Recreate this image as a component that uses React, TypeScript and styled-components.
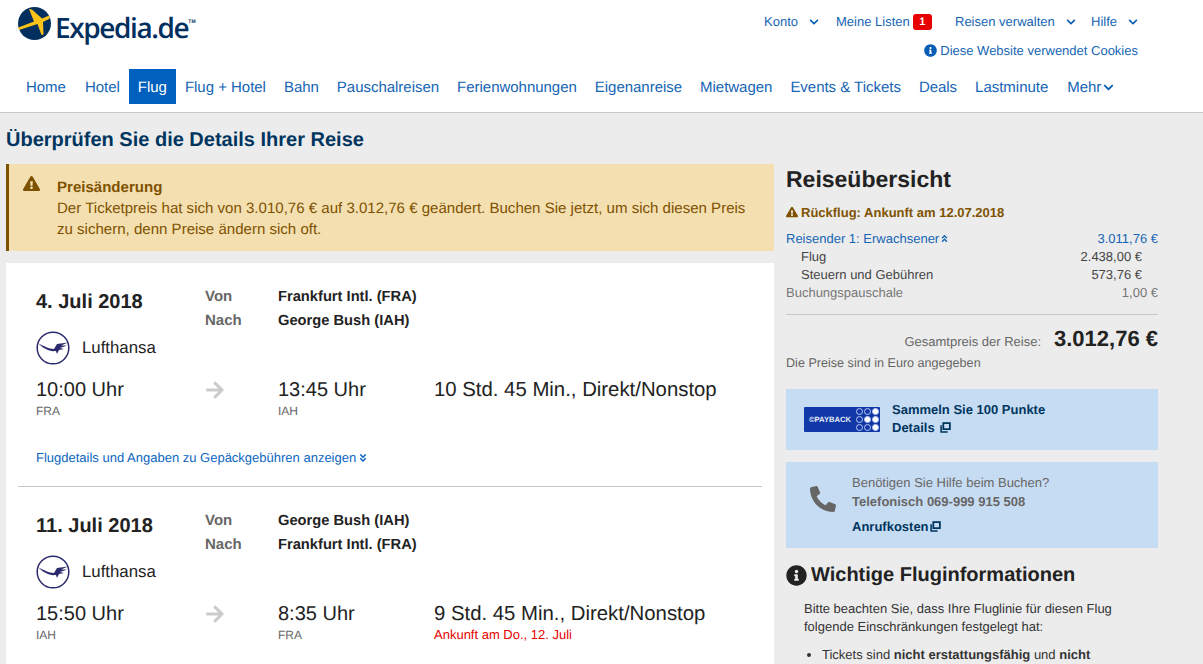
import React from 'react'
import styled, { createGlobalStyle } from 'styled-components'
import { FaChevronDown, FaInfoCircle, FaExclamationTriangle, FaArrowRight, FaAngleDoubleDown, FaAngleDoubleUp, FaPhoneAlt } from 'react-icons/fa'

const Global = createGlobalStyle`
  html, body { margin: 0; padding: 0; background: #ececec; }
  body { font-family: "Liberation Sans", Arial, sans-serif; color: #222; text-rendering: geometricPrecision; }
  #root { height: 664px; overflow: hidden; }
  * { box-sizing: border-box; }
`

const Header = styled.header`
  height: 113px;
  background: #fff;
  border-bottom: 1px solid #c8c8c8;
  padding-top: 7px;
`
const TopRow = styled.div`
  display: flex;
  justify-content: space-between;
  height: 62px;
`
const Logo = styled.div`
  display: flex;
  align-items: flex-start;
  margin-left: 18px;
`
const LogoText = styled.span`
  font-family: "Open Sans", sans-serif;
  font-weight: 600;
  font-size: 28px;
  line-height: 36px;
  letter-spacing: -1.4px;
  color: #022f5e;
  margin: 3px 0 0 4px;
`
const Tm = styled.span`
  font-size: 5px;
  font-weight: 700;
  color: #022f5e;
  margin-top: 12px;
`
const Utility = styled.div`
  display: flex;
  flex-direction: column;
  align-items: flex-end;
  padding-right: 65px;
`
const UtilityRow = styled.div`
  display: flex;
  align-items: center;
  height: 29px;
  font-size: 13px;
  color: #1565b4;
`
const UtilityItem = styled.span<{ $w: number }>`
  display: inline-flex;
  align-items: center;
  width: ${p => p.$w}px;
  svg { font-size: 10px; color: #0a5db5; }
`
const Badge = styled.span`
  background: #e60000;
  color: #fff;
  font-size: 11px;
  font-weight: 700;
  border-radius: 3px;
  width: 19px;
  height: 16px;
  margin-left: 3px;
  display: inline-flex;
  align-items: center;
  justify-content: center;
`
const CookieRow = styled.div`
  display: flex;
  align-items: center;
  gap: 3px;
  font-size: 13px;
  color: #1565b4;
  height: 14px;
  margin-top: 7px;
  svg { font-size: 13px; color: #0a5db5; }
`
const Nav = styled.nav`
  display: flex;
  padding-left: 17px;
  height: 35px;
  letter-spacing: -0.025px;
`
const NavItem = styled.a<{ $active?: boolean }>`
  display: flex;
  align-items: center;
  gap: 2px;
  padding: 1px 9px 0;
  font-size: 15px;
  color: ${p => (p.$active ? '#fff' : '#1565b4')};
  background: ${p => (p.$active ? '#0060bd' : 'transparent')};
  &:first-child { padding-right: 10px; }
  &:last-child { padding-left: 10px; }
  svg { font-size: 11px; color: #0a5db5; }
`

const Title = styled.h1`
  margin: 0;
  padding: 15px 0 0 6px;
  height: 51px;
  font-size: 20px;
  line-height: 24px;
  font-weight: 700;
  color: #00355f;
`
const Main = styled.main`
  display: flex;
  padding-left: 6px;
  gap: 12px;
  align-items: flex-start;
`
const Left = styled.section`
  width: 768px;
`
const Alert = styled.div`
  display: flex;
  height: 87px;
  background: #f3dfb0;
  border-left: 3px solid #7f5200;
  padding: 13px 20px 0 14px;
  color: #7f5200;
  font-size: 15.05px;
  line-height: 21px;
  margin-bottom: 12px;
`
const AlertIcon = styled.div`
  width: 34px;
  margin-top: -2px;
  font-size: 17px;
  flex: none;
`
const AlertTitle = styled.div`
  font-weight: 700;
`
const Card = styled.div`
  background: #fff;
  padding: 0 12px;
`
const Flight = styled.div`
  padding: 25px 18px 0;
  height: 223px;
  & + & { border-top: 1px solid #c8c8c8; height: 224px; }
`
const FlightGrid = styled.div`
  display: grid;
  grid-template-columns: 169px 73px 156px 1fr;
  align-items: start;
`
const DateText = styled.div`
  font-size: 20px;
  font-weight: 700;
  line-height: 28px;
`
const RouteLabels = styled.div`
  font-size: 15px;
  font-weight: 700;
  color: #666;
  line-height: 24px;
  margin-top: -3px;
`
const RouteNames = styled.div`
  font-size: 14.7px;
  font-weight: 700;
  color: #222;
  line-height: 24px;
  margin-top: -3px;
  grid-column: 3 / 5;
`
const Airline = styled.div`
  display: flex;
  align-items: center;
  gap: 12px;
  font-size: 16.8px;
  margin-top: -3px;
  height: 36px;
`
const Times = styled(FlightGrid)`
  margin-top: 12px;
`
const Time = styled.div`
  font-size: 20px;
  line-height: 24px;
`
const Duration = styled(Time)`
  font-size: 20.35px;
`
const Code = styled.div`
  font-size: 12px;
  color: #666;
  line-height: 16px;
  margin-top: 1px;
`
const ArrowCell = styled.div`
  color: #ccc;
  font-size: 20px;
  display: flex;
  align-items: center;
  height: 24px;
`
const Late = styled.div`
  font-size: 13px;
  color: #e60000;
  line-height: 16px;
  margin-top: 1px;
`
const DetailsLink = styled.div`
  margin-top: 31px;
  display: flex;
  align-items: center;
  gap: 2px;
  font-size: 13px;
  color: #0a65bf;
  svg { font-size: 10px; }
`

const Right = styled.aside`
  width: 372px;
`
const SummaryTitle = styled.h2`
  margin: 0;
  font-size: 23px;
  line-height: 30px;
  font-weight: 700;
  height: 37px;
`
const Warn = styled.div`
  display: flex;
  align-items: center;
  gap: 3px;
  font-size: 13px;
  font-weight: 700;
  color: #7f5200;
  height: 22px;
  margin-bottom: 7px;
  svg { font-size: 12px; }
`
const PriceRow = styled.div<{ $tone: 'blue' | 'dark' | 'gray'; $inset?: boolean }>`
  display: flex;
  justify-content: space-between;
  font-size: 13px;
  line-height: 18px;
  padding: ${p => (p.$inset ? '0 16px 0 15px' : '0')};
  color: ${p => (p.$tone === 'blue' ? '#1565b4' : p.$tone === 'dark' ? '#444' : '#777')};
  svg { font-size: 9px; margin-left: 1px; }
`
const Rule = styled.hr`
  border: 0;
  border-top: 1px solid #c8c8c8;
  margin: 12px 0 0;
`
const TotalRow = styled.div`
  display: flex;
  justify-content: flex-end;
  align-items: baseline;
  gap: 13px;
  margin-top: 11px;
  font-size: 13px;
  color: #666;
  height: 28px;
`
const TotalValue = styled.strong`
  font-size: 22px;
  color: #222;
`
const Note = styled.div`
  font-size: 12.6px;
  color: #666;
  line-height: 18px;
  margin-bottom: 17px;
`
const InfoBox = styled.div<{ $h: number }>`
  background: #c6dcf2;
  height: ${p => p.$h}px;
  display: flex;
  margin-bottom: 12px;
  font-size: 13px;
`
const PaybackBox = styled(InfoBox)`
  align-items: center;
  padding-left: 18px;
  gap: 12px;
  color: #00355f;
  font-weight: 700;
  line-height: 18px;
`
const PaybackText = styled.div`
  padding-bottom: 2px;
`
const Payback = styled.div`
  width: 76px;
  height: 25px;
  background: #1038a8;
  border-radius: 1px;
  display: flex;
  align-items: center;
  justify-content: space-between;
  padding: 0 1px 0 5px;
  color: #e8ecfa;
  font-size: 7.6px;
  font-weight: 700;
`
const PaybackDots = styled.div`
  display: grid;
  grid-template-columns: repeat(3, 7px);
  grid-auto-rows: 7px;
  gap: 1px;
`
const Dot = styled.i<{ $on?: boolean }>`
  display: block;
  width: 7px;
  height: 7px;
  border-radius: 50%;
  border: 1px solid #b9c8f0;
  background: ${p => (p.$on ? '#fff' : 'transparent')};
`
const HelpBox = styled(InfoBox)`
  padding: 11px 0 0 24px;
  color: #666;
  line-height: 19px;
`
const PhoneIcon = styled.div`
  width: 42px;
  padding-top: 13px;
  font-size: 26px;
  color: #666;
  flex: none;
`
const Bold = styled.div`
  font-weight: 700;
`
const HelpLink = styled.div`
  font-weight: 700;
  color: #00355f;
  margin-top: 6px;
`
const InfoTitle = styled.h3`
  display: flex;
  align-items: center;
  gap: 4px;
  margin: 0;
  padding-top: 2px;
  font-size: 20px;
  line-height: 26px;
  font-weight: 700;
  svg { font-size: 21px; }
`
const InfoBody = styled.div`
  padding: 6px 0 0 18px;
  font-size: 13px;
  line-height: 18px;
  color: #333;
  p { margin: 6px 0 0; }
  ul { margin: 10px 0 0; padding: 0 0 0 18px; }
`

const ExternalIcon = ({ gap }: { gap: number }) => (
  <svg width="11" height="11" viewBox="0 0 10 10" style={{ verticalAlign: -1, marginLeft: gap }}>
    <rect x="3" y="1" width="6" height="5.5" fill="none" stroke="currentColor" strokeWidth="1.6" />
    <path d="M1 3v6h6" fill="none" stroke="currentColor" strokeWidth="1.4" />
  </svg>
)

const GlobeLogo = () => (
  <svg width="33" height="33" viewBox="0 0 33 33" style={{ flex: 'none' }}>
    <circle cx="16.5" cy="16.5" r="16.5" fill="#022f5e" />
    <path d="M0.3 20.5 L16 14.5 L11 2 L14 2.5 L24 11.5 L30 9 C32 9 32.5 11 31 12 L25 15 L25.5 27.5 L23.5 28 L19.5 17 L1 23 Z" fill="#fdc218" />
  </svg>
)

const Crane = () => (
  <svg width="34" height="34" viewBox="0 0 34 34" style={{ flex: 'none' }}>
    <circle cx="17" cy="17" r="15.8" fill="#fff" stroke="#2b2a6e" strokeWidth="1.5" />
    <path d="M2.5 12.5 C8 15 13 18 18 18 L21 13 L32 11.5 L25 14.5 L31 14.5 L24 17 L28 18 L23 19 L21 23 L20 20 C13 21 7 17 2.5 12.5 Z" fill="#2b2a6e" />
  </svg>
)

const FlightBlock = ({ date, from, to, dep, arr, depCode, arrCode, duration, late, link }: {
  date: string; from: string; to: string; dep: string; arr: string
  depCode: string; arrCode: string; duration: string; late?: string; link?: boolean
}) => (
  <Flight>
    <FlightGrid>
      <DateText>{date}</DateText>
      <RouteLabels>Von<br />Nach</RouteLabels>
      <RouteNames>{from}<br />{to}</RouteNames>
    </FlightGrid>
    <Airline><Crane />Lufthansa</Airline>
    <Times>
      <div><Time>{dep}</Time><Code>{depCode}</Code></div>
      <ArrowCell><FaArrowRight /></ArrowCell>
      <div><Time>{arr}</Time><Code>{arrCode}</Code></div>
      <div><Duration>{duration}</Duration>{late && <Late>{late}</Late>}</div>
    </Times>
    {link && <DetailsLink>Flugdetails und Angaben zu Gepäckgebühren anzeigen <FaAngleDoubleDown /></DetailsLink>}
  </Flight>
)

const navItems = ['Home', 'Hotel', 'Flug', 'Flug + Hotel', 'Bahn', 'Pauschalreisen', 'Ferienwohnungen', 'Eigenanreise', 'Mietwagen', 'Events & Tickets', 'Deals', 'Lastminute']

export default function App() {
  return (
    <>
      <Global />
      <Header>
        <TopRow>
          <Logo>
            <GlobeLogo />
            <LogoText>Expedia.de</LogoText>
            <Tm>TM</Tm>
          </Logo>
          <Utility>
            <UtilityRow>
              <UtilityItem $w={72}>Konto&nbsp;&nbsp;&nbsp;<FaChevronDown /></UtilityItem>
              <UtilityItem $w={119}>Meine Listen<Badge>1</Badge></UtilityItem>
              <UtilityItem $w={136}>Reisen verwalten&nbsp;&nbsp;&nbsp;<FaChevronDown /></UtilityItem>
              <UtilityItem $w={47}>Hilfe&nbsp;&nbsp;&nbsp;<FaChevronDown /></UtilityItem>
            </UtilityRow>
            <CookieRow><FaInfoCircle />Diese Website verwendet Cookies</CookieRow>
          </Utility>
        </TopRow>
        <Nav>
          {navItems.map(item => <NavItem key={item} $active={item === 'Flug'}>{item}</NavItem>)}
          <NavItem>Mehr<FaChevronDown /></NavItem>
        </Nav>
      </Header>
      <Title>Überprüfen Sie die Details Ihrer Reise</Title>
      <Main>
        <Left>
          <Alert>
            <AlertIcon><FaExclamationTriangle /></AlertIcon>
            <div>
              <AlertTitle>Preisänderung</AlertTitle>
              Der Ticketpreis hat sich von 3.010,76 € auf 3.012,76 € geändert. Buchen Sie jetzt, um sich diesen Preis zu sichern, denn Preise ändern sich oft.
            </div>
          </Alert>
          <Card>
            <FlightBlock date="4. Juli 2018" from="Frankfurt Intl. (FRA)" to="George Bush (IAH)" dep="10:00 Uhr" arr="13:45 Uhr" depCode="FRA" arrCode="IAH" duration="10 Std. 45 Min., Direkt/Nonstop" link />
            <FlightBlock date="11. Juli 2018" from="George Bush (IAH)" to="Frankfurt Intl. (FRA)" dep="15:50 Uhr" arr="8:35 Uhr" depCode="IAH" arrCode="FRA" duration="9 Std. 45 Min., Direkt/Nonstop" late="Ankunft am Do., 12. Juli" />
          </Card>
        </Left>
        <Right>
          <SummaryTitle>Reiseübersicht</SummaryTitle>
          <Warn><FaExclamationTriangle />Rückflug: Ankunft am 12.07.2018</Warn>
          <PriceRow $tone="blue"><span>Reisender 1: Erwachsener<FaAngleDoubleUp /></span><span>3.011,76 €</span></PriceRow>
          <PriceRow $tone="dark" $inset><span>Flug</span><span>2.438,00 €</span></PriceRow>
          <PriceRow $tone="dark" $inset><span>Steuern und Gebühren</span><span>573,76 €</span></PriceRow>
          <PriceRow $tone="gray"><span>Buchungspauschale</span><span>1,00 €</span></PriceRow>
          <Rule />
          <TotalRow>Gesamtpreis der Reise: <TotalValue>3.012,76 €</TotalValue></TotalRow>
          <Note>Die Preise sind in Euro angegeben</Note>
          <PaybackBox $h={61}>
            <Payback>
              ©PAYBACK
              <PaybackDots>
                {[0, 0, 1, 0, 1, 1, 0, 0, 1].map((on, i) => <Dot key={i} $on={!!on} />)}
              </PaybackDots>
            </Payback>
            <PaybackText>Sammeln Sie 100 Punkte<br />Details <ExternalIcon gap={2} /></PaybackText>
          </PaybackBox>
          <HelpBox $h={86}>
            <PhoneIcon><FaPhoneAlt /></PhoneIcon>
            <div>
              Benötigen Sie Hilfe beim Buchen?
              <Bold>Telefonisch 069-999 915 508</Bold>
              <HelpLink>Anrufkosten<ExternalIcon gap={1} /></HelpLink>
            </div>
          </HelpBox>
          <InfoTitle><FaInfoCircle />Wichtige Fluginformationen</InfoTitle>
          <InfoBody>
            <p>Bitte beachten Sie, dass Ihre Fluglinie für diesen Flug<br />folgende Einschränkungen festgelegt hat:</p>
            <ul><li>Tickets sind <b>nicht erstattungsfähig</b> und <b>nicht</b></li></ul>
          </InfoBody>
        </Right>
      </Main>
    </>
  )
}
